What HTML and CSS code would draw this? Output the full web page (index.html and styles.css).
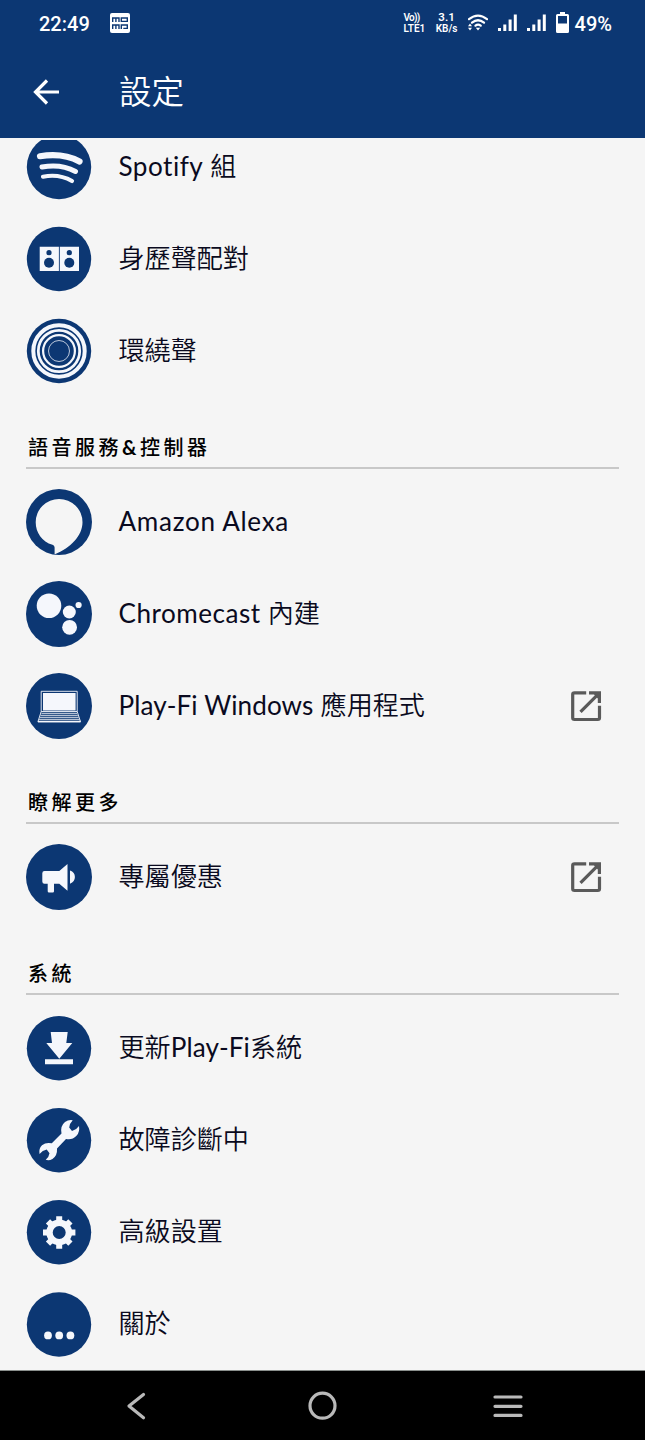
FILE: index.html
```html
<!DOCTYPE html>
<html lang="zh-Hant">
<head>
  <meta charset="UTF-8" />
  <meta name="viewport" content="width=device-width, initial-scale=1.0"/>
  <title>設定</title>
  <link rel="stylesheet" href="styles.css">
</head>
<body>

  <!-- Status bar -->
  <div class="status-bar">
    <span class="clock">22:49</span>
    <svg class="momo" width="20" height="20" viewBox="0 0 20 20">
      <rect width="20" height="20" rx="2" fill="#fff"/>
      <path d="M2.700 9V5h6.300v4M5.900 5v4M11.300 5h6v3.400h-6zM2.700 16v-4h6.300v4M5.900 12v4M11.300 16v-4h6v3.400h-4" fill="none" stroke="#0c3773" stroke-width="1.400"/>
    </svg>
    <div class="status-right">
      <div class="volte"><span class="vo">Vo))</span><span>LTE1</span></div>
      <div class="speed"><span class="rate">3.1</span><span>KB/s</span></div>
      <svg class="wifi" width="20" height="18" viewBox="0 0 20 18">
        <path d="M1 5.200Q10 -2 19 5.200M4 8.700Q10 3.800 16 8.700M7.500 11.700Q10 9.600 12.700 11.700" fill="none" stroke="#fff" stroke-width="2.200" stroke-linecap="round"/>
        <path d="M7.800 13.700h4.400l-2.200 2.800zM0 12.300l2-2.800 2 2.800zM0 13.700l2 2.800 2-2.800z" fill="#fff"/>
      </svg>
      <svg class="signal" width="19" height="18" viewBox="0 0 19 18"><path d="M0 14h3v3H0zM5.300 10.500h3V17h-3zM10.600 5.500h3V17h-3zM15.800 0.500h3V17h-3z" fill="#fff"/></svg>
      <svg class="signal" width="19" height="18" viewBox="0 0 19 18"><path d="M0 14h3v3H0zM5.300 10.500h3V17h-3zM10.600 5.500h3V17h-3zM15.800 0.500h3V17h-3z" fill="#fff"/></svg>
      <svg class="battery" width="13" height="22" viewBox="0 0 13 22">
        <path fill-rule="evenodd" d="M4 0h5v2h2.500Q13 2 13 3.500v16Q13 21 11.500 21h-10Q0 21 0 19.500v-16Q0 2 1.500 2H4zM2 4v7.500h9V4z" fill="#fff"/>
      </svg>
      <span class="percent">49%</span>
    </div>
  </div>

  <!-- App bar -->
  <header class="app-bar">
    <svg class="back" width="28" height="28" viewBox="0 0 28 28">
      <path d="M27 14H3.500M15 2.500L3.500 14 15 25.500" fill="none" stroke="#fff" stroke-width="3.200"/>
    </svg>
    <h1>設定</h1>
  </header>

  <!-- Settings list -->
  <main class="settings">
    <ul class="list first">
      <li class="item">
        <svg class="icon" viewBox="0 0 66 66">
          <circle cx="33" cy="33" r="32.200"/>
          <g class="line" stroke-linecap="round">
            <path d="M14 22.200Q37 18.500 53.500 27.500" stroke-width="6.200"/>
            <path d="M16 33Q35 29.500 49.500 37.500" stroke-width="5"/>
            <path d="M17 42.700Q33 39.500 46 47" stroke-width="4.200"/>
          </g>
        </svg>
        <span class="label"><span class="latin">Spotify</span> 組</span>
      </li>
      <li class="item">
        <svg class="icon" viewBox="0 0 66 66">
          <circle cx="33" cy="33" r="32.200"/>
          <path class="light" d="M13.700 20.700h19.200V45H13.700zM33.800 20.700H53V45H33.800z"/>
          <circle cx="23" cy="26.700" r="2.600"/><circle cx="23" cy="36.700" r="5"/>
          <circle cx="43.300" cy="26.700" r="2.600"/><circle cx="43.300" cy="36.700" r="5"/>
        </svg>
        <span class="label">身歷聲配對</span>
      </li>
      <li class="item">
        <svg class="icon" viewBox="0 0 66 66">
          <circle cx="33" cy="33" r="32.200"/>
          <g class="line">
            <circle cx="33" cy="33" r="25.700" stroke-width="4"/>
            <circle cx="33" cy="33" r="20.700" stroke-width="2.800"/>
            <circle cx="33" cy="33" r="15.900" stroke-width="2.200"/>
            <circle cx="33" cy="33" r="10.500" stroke-width="1" opacity="0.750"/>
          </g>
        </svg>
        <span class="label">環繞聲</span>
      </li>
    </ul>

    <h2 class="section">語音服務<b>&amp;</b>控制器</h2>
    <ul class="list">
      <li class="item">
        <svg class="icon" viewBox="0 0 66 66">
          <circle cx="33" cy="33" r="33"/>
          <path class="cutout" d="M28.600 65V58.500Q28.600 56.500 26.500 55.800C16 53 9.700 43.500 9.700 33.300A23.400 23.400 0 0 1 56.500 33.300C56.500 47 44 59 29.500 65z"/>
        </svg>
        <span class="label"><span class="latin wide">Amazon Alexa</span></span>
      </li>
      <li class="item">
        <svg class="icon" viewBox="0 0 66 66">
          <circle cx="33" cy="33" r="33"/>
          <g class="light">
            <circle cx="23" cy="24.700" r="12.300"/>
            <circle cx="43.300" cy="31" r="6.500"/>
            <circle cx="52.600" cy="24" r="3.100"/>
            <circle cx="43.600" cy="46.300" r="7.400"/>
          </g>
        </svg>
        <span class="label"><span class="latin">Chromecast</span> 內建</span>
      </li>
      <li class="item">
        <svg class="icon" viewBox="0 0 66 66">
          <circle cx="33" cy="33" r="33"/>
          <path class="light" d="M17 20h32.600v17.600H17z"/>
          <g class="line" stroke-width="0.900">
            <path d="M15.200 38.500V18.300h36v20.200z"/>
            <path d="M15.500 40.300h35.500M14.600 42.300h37.200M13.800 44.300h38.800M13 46.300h40.500"/>
            <path d="M15.200 38.500L11.900 48.800h42.600L51.200 38.500" />
            <path d="M12 48.500h42.500" stroke-width="1.600"/>
          </g>
        </svg>
        <span class="label"><span class="latin tight">Play-Fi Windows</span> 應用程式</span>
        <svg class="external" width="31" height="31" viewBox="0 0 31 31">
          <path d="M15.200 1.800H3.500Q1.700 1.800 1.700 3.500v23.300q0 1.700 1.800 1.700h23.300q1.700 0 1.700-1.700V14.800M9.500 20.800L27 3.300" fill="none" stroke="#5a5a5a" stroke-width="3.200"/>
          <path d="M18 0.300h12v11.600h-3.200V7.500L23 3.400h-5z" fill="#5a5a5a"/>
        </svg>
      </li>
    </ul>

    <h2 class="section">瞭解更多</h2>
    <ul class="list">
      <li class="item">
        <svg class="icon" viewBox="0 0 66 66">
          <circle cx="33" cy="33" r="33"/>
          <path class="light" d="M18.500 27H33.300L41.500 20V46.700L33.300 39.700H28V47.300Q28 48.500 26.800 48.500H23Q21.700 48.500 21.700 47.300V39.700H18.500Q16.300 39.700 16.300 37.500V29.200Q16.300 27 18.500 27zM44 26.500Q48.900 28.300 48.900 33T44 39.700z"/>
        </svg>
        <span class="label">專屬優惠</span>
        <svg class="external" width="31" height="31" viewBox="0 0 31 31">
          <path d="M15.200 1.800H3.500Q1.700 1.800 1.700 3.500v23.300q0 1.700 1.800 1.700h23.300q1.700 0 1.700-1.700V14.800M9.500 20.800L27 3.300" fill="none" stroke="#5a5a5a" stroke-width="3.200"/>
          <path d="M18 0.300h12v11.600h-3.200V7.500L23 3.400h-5z" fill="#5a5a5a"/>
        </svg>
      </li>
    </ul>

    <h2 class="section">系統</h2>
    <ul class="list">
      <li class="item">
        <svg class="icon" viewBox="0 0 66 66">
          <circle cx="33" cy="33.300" r="32.200"/>
          <path class="light" d="M24.700 17h17L40.300 28h6L33.300 43.700 20.300 28H26zM19 44.300h28v5H19z"/>
        </svg>
        <span class="label">更新<span class="latin tight">Play-Fi</span>系統</span>
      </li>
      <li class="item">
        <svg class="icon" viewBox="0 0 66 66">
          <circle cx="33" cy="33.300" r="32.200"/>
          <path class="light" d="M46.700 13.200Q43.500 16.500 43.200 20.500L46 24Q50.500 22.800 53 19Q54 25 50.500 28.800Q46 33.500 40 32L31 41.500Q31.500 48.500 26.500 52Q23 54 19.700 52.800Q23 50 23.500 46.200L20.700 42.500Q16.500 43.300 13.500 47Q12.500 41.500 16 38.200Q20 35 25.800 36.300L35.500 26.500Q34 19 39 15Q42.500 12.500 46.700 13.200z"/>
        </svg>
        <span class="label">故障診斷中</span>
      </li>
      <li class="item">
        <svg class="icon" viewBox="0 0 66 66">
          <circle cx="33" cy="33.300" r="32.200"/>
          <g class="line" transform="translate(33.200 33.500)">
            <circle r="9.700" stroke-width="6.400"/>
            <path d="M0-16.200v5M0 16.200v-5M-16.200 0h5M16.200 0h-5M-11.200-11.200l3 3M11.200 11.200l-3-3M-11.200 11.200l3-3M11.200-11.200l-3 3" stroke-width="6"/>
          </g>
        </svg>
        <span class="label">高級設置</span>
      </li>
      <li class="item">
        <svg class="icon" viewBox="0 0 66 66">
          <circle cx="33" cy="33.500" r="32.200"/>
          <g class="light">
            <circle cx="22" cy="44.400" r="3.900"/>
            <circle cx="33.200" cy="44.400" r="3.900"/>
            <circle cx="44.400" cy="44.400" r="3.900"/>
          </g>
        </svg>
        <span class="label">關於</span>
      </li>
    </ul>
  </main>

  <!-- Android navigation -->
  <nav class="nav-bar">
    <svg width="32" height="32" viewBox="0 0 32 32"><path d="M23.500 4.500L9 16l14.500 11.700" stroke-linecap="round" stroke-linejoin="round"/></svg>
    <svg width="32" height="32" viewBox="0 0 32 32"><circle cx="16.500" cy="15.700" r="12.500"/></svg>
    <svg width="32" height="32" viewBox="0 0 32 32"><path d="M3 7h26M3 16.300h26M3 25.400h26" stroke-linecap="round"/></svg>
  </nav>

</body>
</html>
```
FILE: styles.css
```css
* {
  box-sizing: border-box;
}

body {
  margin: 0;
  height: 1440px;
  display: flex;
  flex-direction: column;
  background: #f5f5f5;
  font-family: Lato, "Noto Sans CJK TC", sans-serif;
  color: #0a0a20;
  overflow: hidden;
}

.status-bar {
  display: flex;
  align-items: center;
  height: 46px;
  padding: 0 33px 0 39px;
  background: #0c3773;
  color: white;
  font-family: Roboto, sans-serif;
}

.clock {
  width: 71px;
  padding-top: 1px;
  font-size: 20px;
  font-weight: 500;
}

.status-right {
  display: flex;
  align-items: center;
  margin-left: auto;
}

.volte, .speed {
  display: flex;
  flex-direction: column;
  font-size: 10px;
  line-height: 11px;
  font-weight: 600;
}

.volte {
  width: 23px;
  margin-right: 9px;
}

.vo {
  letter-spacing: -0.7px;
}

.speed {
  width: 22px;
  align-items: center;
  margin-right: 10px;
}

.rate {
  font-size: 11.5px;
}

.wifi {
  margin-right: 10px;
}

.signal {
  margin-right: 10px;
}

.battery {
  margin-right: 6px;
}

.percent {
  padding-top: 1px;
  font-size: 20px;
  font-weight: 500;
}

.app-bar {
  display: flex;
  align-items: center;
  height: 92px;
  padding-left: 32px;
  background: #0c3773;
}

.app-bar h1 {
  margin: 0 0 1px 59px;
  color: white;
  font-size: 32.5px;
  font-weight: 350;
  line-height: 40px;
}

.settings {
  flex: 1;
  min-height: 0;
  margin-top: 2px;
  padding: 0 26px;
  overflow: hidden;
}

.list {
  margin: 0;
  padding: 0;
  list-style: none;
}

/* list is scrolled a little under the app bar */
.first {
  margin-top: -19px;
}

.item {
  display: flex;
  align-items: center;
  height: 92px;
}

.icon {
  width: 66px;
  height: 66px;
  fill: #0c3773;
}

.icon .light {
  fill: #f5f7fc;
}

.icon .cutout {
  fill: #f5f5f5;
}

.icon .line {
  fill: none;
  stroke: #f5f7fc;
}

.label {
  margin: 0 0 2px 26.5px;
  font-size: 26.1px;
  font-weight: 350;
  line-height: 36px;
  white-space: nowrap;
}

.latin {
  font-weight: 400;
  letter-spacing: 0.5px;
}

.latin.wide {
  letter-spacing: 0.7px;
}

.latin.tight {
  letter-spacing: 0.1px;
}

.external {
  margin-left: auto;
  margin-right: 17px;
}

.section {
  height: 72px;
  margin: 0 0 7px;
  padding: 36px 0 0 2px;
  border-bottom: 2px solid #c8c8c8;
  color: #000;
  font-size: 20px;
  font-weight: 500;
  line-height: 28px;
  letter-spacing: 3.5px;
}

.nav-bar {
  display: flex;
  justify-content: space-between;
  align-items: center;
  height: 70px;
  padding: 0 121px 0 120px;
  background: #000;
  border-top: 1px solid #8a8f8c;
}

.nav-bar svg {
  fill: none;
  stroke: #b9b9b9;
  stroke-width: 3.2;
}
```
